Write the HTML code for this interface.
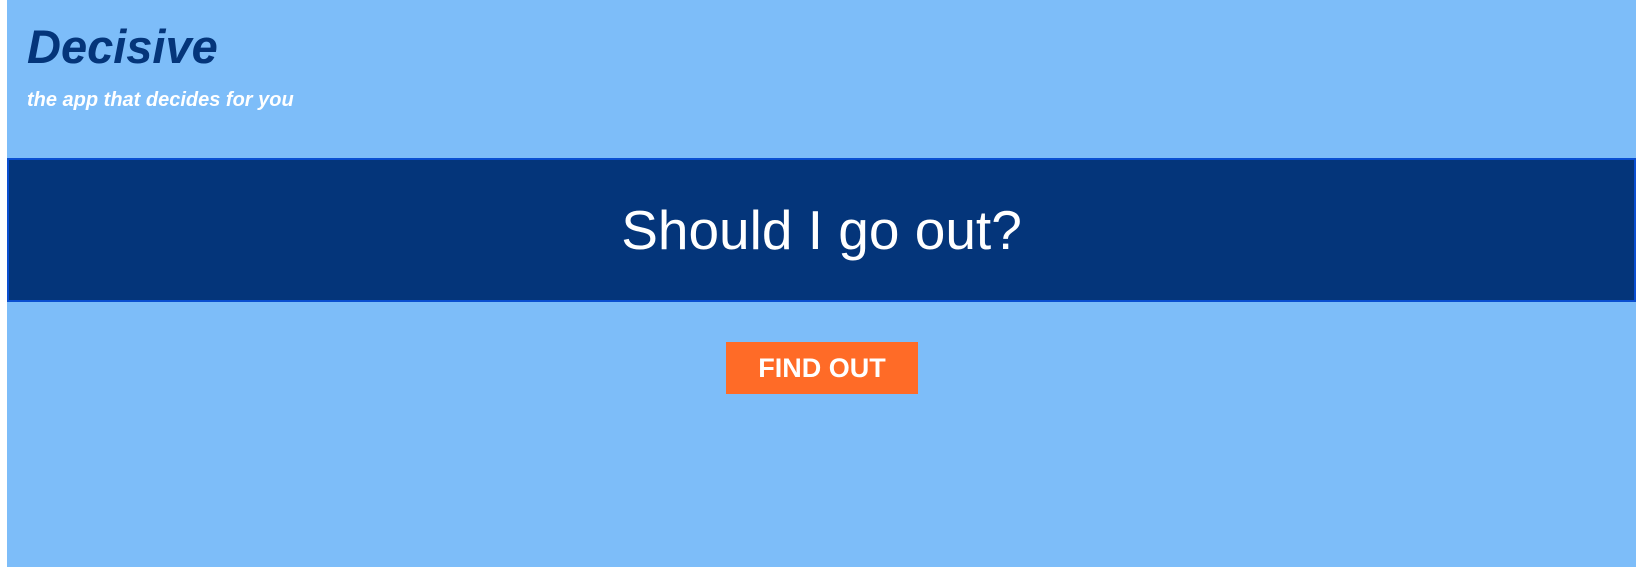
<!DOCTYPE html>
<html><head><meta charset="utf-8"><style>
html,body{margin:0;padding:0;width:1645px;height:567px;background:#fff;overflow:hidden;font-family:"Liberation Sans",Arial,sans-serif}
.main{position:absolute;left:7px;top:0;width:1629px;height:567px;background:#7dbdf9}
.t{position:absolute;left:20px;top:20px;margin:0;font-size:47px;font-weight:bold;font-style:italic;color:#04357a;line-height:54px}
.s{position:absolute;left:20px;top:88px;margin:0;font-size:20px;font-weight:bold;font-style:italic;color:#fff;line-height:24px}
.band{position:absolute;left:0;top:158px;width:1625px;height:140px;background:#04357a;border:2px solid #0a4fd1;color:#fff;text-align:center;font-size:55px;line-height:140px}
.btn{position:absolute;left:719px;top:342px;width:192px;height:52px;background:#ff6b27;color:#fff;font-weight:bold;font-size:27px;line-height:52px;text-align:center}
</style></head><body>
<div class="main">
<div class="t">Decisive</div>
<div class="s">the app that decides for you</div>
<div class="band">Should I go out?</div>
<div class="btn">FIND OUT</div>
</div>
</body></html>
